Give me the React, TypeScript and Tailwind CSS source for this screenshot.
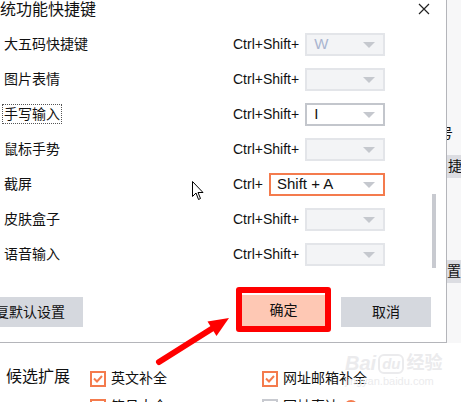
import React from 'react';

type Row = { label: string; mod: string; value: string; state: 'off' | 'on' | 'focus'; dotted?: boolean };

const rows: Row[] = [
  { label: '大五码快捷键', mod: 'Ctrl+Shift+', value: 'W', state: 'off' },
  { label: '图片表情', mod: 'Ctrl+Shift+', value: '', state: 'off' },
  { label: '手写输入', mod: 'Ctrl+Shift+', value: 'I', state: 'on', dotted: true },
  { label: '鼠标手势', mod: 'Ctrl+Shift+', value: '', state: 'off' },
  { label: '截屏', mod: 'Ctrl+', value: 'Shift + A', state: 'focus' },
  { label: '皮肤盒子', mod: 'Ctrl+Shift+', value: '', state: 'off' },
  { label: '语音输入', mod: 'Ctrl+Shift+', value: '', state: 'off' },
];

function Caret() {
  return (
    <svg width="12" height="6" viewBox="0 0 12 6" className="shrink-0">
      <path d="M0 0 L12 0 L6 6 Z" fill="#c5c8ce" />
    </svg>
  );
}

function Select({ value, state }: { value: string; state: Row['state'] }) {
  if (state === 'focus') {
    return (
      <div className="flex h-[23px] w-[116px] items-center justify-between border-2 border-[#f47b4d] bg-white pl-[6px] pr-[8px] text-[15px] text-[#111]">
        <span>{value}</span>
        <Caret />
      </div>
    );
  }
  if (state === 'on') {
    return (
      <div className="flex h-[23px] w-[80px] items-center justify-between border-2 border-[#c3c6cc] bg-white pl-[7px] pr-[8px] text-[15px] text-[#111]">
        <span>{value}</span>
        <Caret />
      </div>
    );
  }
  return (
    <div className="flex h-[23px] w-[80px] items-center justify-between border-2 border-[#e3e5e9] bg-[#f3f4f6] pl-[7px] pr-[8px] text-[15px] text-[#a9b5d0]">
      <span>{value}</span>
      <Caret />
    </div>
  );
}

function Check({ on }: { on: boolean }) {
  return (
    <div className={`flex h-[16px] w-[16px] shrink-0 items-center justify-center border-2 ${on ? 'border-[#f47b4d]' : 'border-[#c8cad0]'} bg-white`}>
      {on && (
        <svg width="10" height="8" viewBox="0 0 10 8">
          <path d="M1 3.5 L4 6.5 L9 1" fill="none" stroke="#f47b4d" strokeWidth="2" />
        </svg>
      )}
    </div>
  );
}

export default function App() {
  return (
    <div className="relative h-[402px] w-[461px] overflow-hidden bg-white text-[#111] [font-family:'Liberation_Sans','Noto_Sans_CJK_SC',sans-serif]">
      <div className="flex h-[343px]">
        {/* dialog */}
        <div className="flex w-[447px] shrink-0 flex-col overflow-hidden border-b border-r border-[#b4b5ba] bg-white">
          <div className="flex h-[27px] items-start justify-between">
            <span className="text-[16px] leading-[19px]">统功能快捷键</span>
            <svg width="12" height="12" viewBox="0 0 12 12" className="mr-[16px] mt-[3px]">
              <path d="M1 1 L11 11 M11 1 L1 11" stroke="#222" strokeWidth="1.2" />
            </svg>
          </div>

          <div className="flex">
            <div className="w-[430px]">
              {rows.map((r) => (
                <div key={r.label} className="flex h-[35px] items-center">
                  <div className="w-[233px] pl-[3px] text-[14px]">
                    <span className={`px-[1px] py-[1px] ${r.dotted ? 'outline outline-1 outline-dotted outline-[#555]' : ''}`}>{r.label}</span>
                  </div>
                  <span className="mr-[6px] text-[14px]">{r.mod}</span>
                  <Select value={r.value} state={r.state} />
                </div>
              ))}
            </div>
            <div className="ml-[2px] pt-[167px]">
              <div className="h-[74px] w-[4px] bg-[#c8cad0]" />
            </div>
          </div>

          <div className="mt-[15px] flex items-start text-[14px]">
            <button className="-ml-[37px] mt-[10px] h-[30px] w-[120px] bg-[#d5d8de]">恢复默认设置</button>
            <div className="ml-[153px] h-[45px] w-[95px] rounded-[3px] border-[6px] border-[#ff0000] bg-white pt-[2px]">
              <div className="flex h-[31px] items-center justify-center bg-[#fec8b4]">确定</div>
            </div>
            <button className="ml-[10px] mt-[10px] h-[30px] w-[90px] bg-[#d5d8de]">取消</button>
          </div>
        </div>

        {/* window behind */}
        <div className="flex flex-1 flex-col overflow-hidden bg-[#f7f7f8] text-[14px]">
          <span className="ml-[-8px] mt-[125px] whitespace-nowrap leading-[16px]">号</span>
          <div className="mt-[14px] flex h-[23px] items-center whitespace-nowrap bg-[#dcdde2] pl-[1px]">捷键</div>
          <div className="mt-[82px] flex h-[23px] items-center whitespace-nowrap bg-[#dcdde2] pl-[0px]">置</div>
        </div>
      </div>

      {/* options below */}
      <div className="flex pt-[25px]">
        <span className="ml-[6px] w-[84px] text-[16px] leading-[18px]">候选扩展</span>
        <div className="flex flex-col gap-[7px] text-[14px]">
          <div className="flex">
            <div className="flex w-[172px] items-center gap-[5px]">
              <Check on />
              <span>英文补全</span>
            </div>
            <div className="flex items-center gap-[5px]">
              <Check on />
              <span>网址邮箱补全</span>
            </div>
          </div>
          <div className="flex">
            <div className="flex w-[172px] items-center gap-[5px]">
              <Check on />
              <span>符号大全</span>
            </div>
            <div className="flex items-center gap-[5px]">
              <Check on={false} />
              <span>网址直达</span>
              <span className="h-[14px] w-[14px] rounded-full border-2 border-[#f47b4d]" />
            </div>
          </div>
        </div>
      </div>

      {/* watermark */}
      <div className="pointer-events-none absolute left-[345px] top-[352px] flex flex-col text-[#ebebed]">
        <div className="flex items-end gap-[2px] text-[20px] font-bold italic leading-[22px]">
          <span>Bai</span>
          <span className="rounded-[6px] border-2 border-[#ebebed] px-[2px] text-[15px] leading-[16px]">du</span>
          <span className="text-[18px] not-italic">经验</span>
        </div>
        <span className="text-[11px] leading-[14px]">jingyan.baidu.com</span>
      </div>

      {/* annotation arrow */}
      <svg className="pointer-events-none absolute left-0 top-0" width="461" height="402">
        <line x1="159" y1="362" x2="213" y2="328" stroke="#ff0000" strokeWidth="6" strokeLinecap="round" />
        <polygon points="229,318 216.5,336 207.5,321.5" fill="#ff0000" />
      </svg>

      {/* mouse cursor */}
      <svg className="pointer-events-none absolute left-[192px] top-[181px]" width="13" height="20" viewBox="0 0 13 20">
        <path d="M0.5 0.5 L0.5 15.5 L4 12 L6.5 18.5 L8.5 17.5 L6 11.5 L11 11.5 Z" fill="#fff" stroke="#000" strokeWidth="1" strokeLinejoin="round" />
      </svg>
    </div>
  );
}
